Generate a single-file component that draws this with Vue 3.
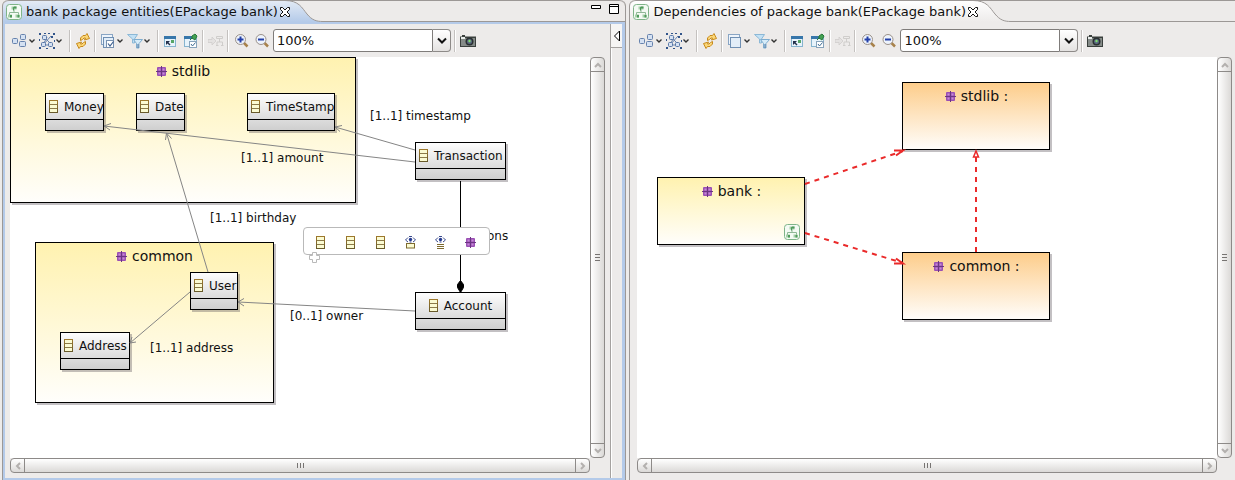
<script setup>
import { ref } from 'vue'

const tools = [
  { icon: 'arrange', label: 'Arrange all', menu: true },
  { icon: 'select', label: 'Select', menu: true },
  { sep: true },
  { icon: 'refresh', label: 'Refresh' },
  { sep: true },
  { icon: 'layers', label: 'Layers', menu: true },
  { icon: 'filter', label: 'Filters', menu: true },
  { sep: true },
  { icon: 'mode', label: 'Layouting mode' },
  { icon: 'pin', label: 'Pin elements' },
  { sep: true },
  { icon: 'paste', label: 'Paste layout', disabled: true },
  { sep: true },
  { icon: 'zoomin', label: 'Zoom in', wide: true },
  { icon: 'zoomout', label: 'Zoom out', wide: true },
]

const views = ref([
  {
    id: 'entities',
    title: 'bank package entities(EPackage bank)',
    active: true,
    zoom: '100%',
    packages: [
      { name: 'stdlib', x: 0, y: 0, w: 346, h: 146 },
      { name: 'common', x: 25, y: 185, w: 239, h: 161 },
    ],
    classes: [
      { name: 'Money', x: 35, y: 36, w: 59 },
      { name: 'Date', x: 126, y: 36, w: 49 },
      { name: 'TimeStamp', x: 237, y: 36, w: 88 },
      { name: 'Transaction', x: 405, y: 85, w: 91 },
      { name: 'User', x: 180, y: 215, w: 48 },
      { name: 'Account', x: 405, y: 235, w: 91, centered: true },
      { name: 'Address', x: 50, y: 275, w: 70 },
    ],
    labels: [
      { text: '[1..1] timestamp', x: 360, y: 51 },
      { text: '[1..1] amount', x: 231, y: 93 },
      { text: '[1..1] birthday', x: 200, y: 153 },
      { text: 'ons', x: 477, y: 171 },
      { text: '[0..1] owner', x: 280, y: 251 },
      { text: '[1..1] address', x: 140, y: 283 },
    ],
    palette: ['class', 'class', 'class', 'eyebox', 'eyelist', 'package'],
  },
  {
    id: 'dependencies',
    title: 'Dependencies of package bank(EPackage bank)',
    active: false,
    zoom: '100%',
    packages: [
      { name: 'stdlib :', x: 265, y: 25, w: 148, h: 68, tone: 'orange' },
      { name: 'bank :', x: 20, y: 120, w: 148, h: 68, badge: true },
      { name: 'common :', x: 265, y: 195, w: 148, h: 68, tone: 'orange' },
    ],
    classes: [],
    labels: [],
    palette: null,
  },
])

const place = (n) => ({
  left: n.x + 'px',
  top: n.y + 'px',
  width: n.w ? n.w + 'px' : null,
  height: n.h ? n.h + 'px' : null,
})
</script>

<template>
  <svg class="defs" width="0" height="0" aria-hidden="true">
    <defs>
      <linearGradient id="g-active" x1="0" y1="0" x2="0" y2="1">
        <stop offset="0" stop-color="#e4ebf5" /><stop offset="1" stop-color="#b4cae9" />
      </linearGradient>
      <linearGradient id="g-idle" x1="0" y1="0" x2="0" y2="1">
        <stop offset="0" stop-color="#ffffff" /><stop offset="1" stop-color="#edebea" />
      </linearGradient>
      <linearGradient id="g-olive" x1="0" y1="0" x2="0" y2="1">
        <stop offset="0" stop-color="#a07a2c" /><stop offset="1" stop-color="#66592a" />
      </linearGradient>
    </defs>
    <symbol id="i-diagram" viewBox="0 0 16 16">
      <rect x=".5" y=".5" width="15" height="15" rx="3" fill="#f4faf4" stroke="#7fb489" />
      <path d="M8 5v4M3.500 11V8.500h9V11" fill="none" stroke="#8fb896" />
      <path d="M5.500 2.500h5v3h-5zM2 10.500h4v3H2zM9.500 10.500h4v3h-4z" fill="#a5cfa9" />
      <path d="M8 2.500h2.500v2H8v2H7v-3zM4 11h2v2.500H4zM11.500 11h2v2.500h-2z" fill="#4f9a5b" />
    </symbol>
    <symbol id="i-arrange" viewBox="0 0 16 16">
      <g fill="#d5e1f2" stroke="#6682ad">
        <rect x=".5" y="5.500" width="5" height="5" rx="1" />
        <rect x="8.500" y="1.500" width="5" height="5" rx="1" />
        <rect x="7.500" y="8.500" width="6" height="5" rx="1" />
      </g>
    </symbol>
    <symbol id="i-select" viewBox="0 0 16 16">
      <path d="M6 5l6 6M4 12l4-8M12 3L4 12h8" fill="none" stroke="#6682ad" />
      <g fill="#d5e1f2" stroke="#5877a6">
        <rect x="3.500" y="2.500" width="4" height="4" rx="1" />
        <rect x="2.500" y="9.500" width="4" height="4" rx="1" />
        <rect x="9.500" y="9.500" width="4" height="4" rx="1" />
      </g>
      <path d="M0 0h2v2H0zM5 0h2v1H5zM9 0h2v1H9zM14 0h2v2h-2zM0 6h1v2H0zM0 14h2v2H0zM7 15h2v1H7zM14 14h2v2h-2zM15 7h1v2h-1zM12 3h2v2h-2z" fill="#31548a" />
    </symbol>
    <symbol id="i-refresh" viewBox="0 0 16 16">
      <g fill="#fbd778" stroke="#c78a1c" stroke-linejoin="round">
        <path d="M5.500 7.500V5L8 2.500h2.500L12 .5l2.500 5-5 1.500 1-2H9L7.500 6.500z" />
        <path d="M10.500 8.500V11L8 13.500H5.500L4 15.500l-2.500-5 5-1.500-1 2H7l1.500-1.500z" />
      </g>
    </symbol>
    <symbol id="i-layers" viewBox="0 0 16 16">
      <rect x="1.500" y="1.500" width="11" height="10" fill="#eef4fb" stroke="#89a5c4" />
      <rect x="3.500" y="4.500" width="10" height="10" fill="#e2edf8" stroke="#6f8fb3" />
    </symbol>
    <symbol id="i-layerscheck" viewBox="0 0 16 16">
      <use href="#i-layers" />
      <rect x="6.500" y="7.500" width="7" height="7" fill="#fff" stroke="#7791b0" />
      <path d="M8 10.500l2 2.500 3.500-4.500" fill="none" stroke="#3d5f8f" stroke-width="1.200" />
    </symbol>
    <symbol id="i-filter" viewBox="0 0 16 16">
      <path d="M.5 1.500h10L7.500 6v4h-2V6z" fill="#c2e1f5" stroke="#8cb8d6" />
      <path d="M6.500 6.500h9l-3.500 4v4.500H9.500v-4.500z" fill="#d6ecf9" stroke="#7eadcf" />
      <path d="M11 11v4" stroke="#426f9c" />
    </symbol>
    <symbol id="i-mode" viewBox="0 0 16 16">
      <rect x="1.500" y="4.500" width="11" height="9" fill="#e7f3fb" stroke="#86b4cf" />
      <path d="M1 3h12v3H1z" fill="#3776aa" />
      <path d="M3 8h4l-1.500 1.500L7.500 11.500l-1 1-2-2L3 12z" fill="#222f4a" />
      <rect x="8" y="7" width="3" height="3" fill="#57a667" />
    </symbol>
    <symbol id="i-pin" viewBox="0 0 16 16">
      <rect x="1.500" y="4.500" width="12" height="9" fill="#e7f3fb" stroke="#86b4cf" />
      <path d="M1 3h9v3H1z" fill="#3776aa" />
      <path d="M7 7l2-2M9 3l3-2 2 2-2 4-3-2z" stroke="#267837" fill="#43a153" />
      <rect x="6.500" y="8.500" width="7" height="6" fill="#fff" stroke="#87a3bb" />
      <path d="M8 11l1.500 2 3-3.500" fill="none" stroke="#3e6c94" />
    </symbol>
    <symbol id="i-paste" viewBox="0 0 16 16">
      <path d="M0 6.500h4V4l4 4-4 4V9.500H0z" fill="#e4e2e1" stroke="#cfcdcb" stroke-width=".8" />
      <path d="M8.500 3.500h6v2h-6zM11.500 6v3M9 12V9h5.500v3M8 12.500h2.500M13 12.500h2.500" fill="none" stroke="#cfcdcb" />
    </symbol>
    <symbol id="i-zoomin" viewBox="0 0 18 16">
      <path d="M11 10l3.500 3.500" stroke="#a8824b" stroke-width="2.500" />
      <circle cx="7.500" cy="6.500" r="5" fill="#edf3fc" stroke="#9b9189" />
      <path d="M4.500 6.500h6M7.500 3.500v6" stroke="#2440a8" stroke-width="2" />
    </symbol>
    <symbol id="i-zoomout" viewBox="0 0 18 16">
      <path d="M9.500 10l3.500 3.500" stroke="#a8824b" stroke-width="2.500" />
      <circle cx="6" cy="6.500" r="5" fill="#edf3fc" stroke="#9b9189" />
      <path d="M3 6.500h6" stroke="#2440a8" stroke-width="2" />
    </symbol>
    <symbol id="i-camera" viewBox="0 0 16 12">
      <path d="M2 0h3v1.500h11V12H0V1.500h2z" fill="#3a403d" />
      <path d="M1 3h14v8H1z" fill="#858b88" />
      <path d="M1 2h4v2H1z" fill="#e8ebe9" />
      <circle cx="9.500" cy="6.500" r="4" fill="#2b3032" />
      <circle cx="9.500" cy="6.500" r="2.500" fill="#5a6a80" />
      <circle cx="9.500" cy="6" r="1.200" fill="#7fdc6a" />
    </symbol>
    <symbol id="i-chevron" viewBox="0 0 8 8">
      <path d="M1.500 2.500L4 5l2.500-2.500" fill="none" stroke="#333" stroke-width="1.400" />
    </symbol>
    <symbol id="i-package" viewBox="0 0 11 11">
      <rect x="1" y="1" width="9" height="9" rx="1" fill="#9a4fb4" />
      <path d="M2.500 2.500h2v2h-2zM6.500 2.500h2v2h-2zM2.500 6.500h2v2h-2zM6.500 6.500h2v2h-2z" fill="#c58ad6" />
      <path d="M5.500 0v11M0 5.500h11" stroke="#6b3582" />
    </symbol>
    <symbol id="i-class" viewBox="0 0 9 13">
      <path fill="url(#g-olive)" d="M0 0h9v13H0z" />
      <path d="M1 1h7v11H1z" fill="#fbfbd2" />
      <path d="M1 4.500h7M1 8.500h7" stroke="#8b7a4a" />
    </symbol>
    <symbol id="i-eyebox" viewBox="0 0 11 13">
      <path d="M.5 4L3 1.500M10.500 4L8 1.500M.5 4L3 6M10.500 4L8 6M4 .5h3M4.500 6h2" stroke="#3a4a8c" fill="none" />
      <circle cx="5.500" cy="3.500" r="1.700" fill="#253a8f" />
      <rect x="1.500" y="7.500" width="8" height="4.500" fill="#fbfbd2" stroke="#7d6a2f" />
    </symbol>
    <symbol id="i-eyelist" viewBox="0 0 11 13">
      <path d="M.5 4L3 1.500M10.500 4L8 1.500M.5 4L3 6M10.500 4L8 6M4 .5h3M4.500 6h2" stroke="#3a4a8c" fill="none" />
      <circle cx="5.500" cy="3.500" r="1.700" fill="#253a8f" />
      <path d="M2 8.500h7M2 10.500h7M2 12.500h7" stroke="#7d6a2f" />
    </symbol>
    <symbol id="i-close" viewBox="0 0 12 12">
      <path d="M1.500 1.500h2L6 4l2.500-2.500h2v2L8 6l2.500 2.500v2h-2L6 8l-2.500 2.500h-2v-2L4 6 1.500 3.500z" fill="#fff" stroke="#111" />
    </symbol>
  </svg>

  <main class="workbench">
    <section v-for="v in views" :key="v.id" class="view" :class="{ active: v.active }">
      <header class="tabs">
        <div class="tab">
          <svg class="tab-icon" aria-hidden="true"><use href="#i-diagram" /></svg>
          <span class="tab-title">{{ v.title }}</span>
          <button class="close" type="button" aria-label="Close tab"><svg><use href="#i-close" /></svg></button>
        </div>
        <svg class="tail" viewBox="0 0 38 22" aria-hidden="true">
          <path d="M0 0C14 0 17 8 22 14S31 21.500 38 21.500V22H0z" :fill="v.active ? 'url(#g-active)' : 'url(#g-idle)'" />
          <path d="M0 .5h38M0 .5C14 .5 17 8 22 14S31 21.500 38 21.500" fill="none" stroke="#9c9896" />
        </svg>
        <div class="tab-rest">
          <template v-if="v.active">
            <button class="win" type="button" aria-label="Minimize"><svg><path d="M.5 2.500h9v3h-9z" fill="#fff" stroke="#000" /></svg></button>
            <button class="win" type="button" aria-label="Maximize"><svg><path d="M.5 1.500h9v9h-9zM.5 3.500h9" fill="#fff" stroke="#000" /></svg></button>
          </template>
        </div>
      </header>

      <div class="frame">
        <div class="main">
          <div class="toolbar" role="toolbar" :aria-label="v.title">
            <template v-for="(t, i) in tools" :key="i">
              <span v-if="t.sep" class="sep"></span>
              <button v-else type="button" class="tool" :class="{ menu: t.menu, wide: t.wide }" :disabled="t.disabled" :aria-label="t.label">
                <svg class="glyph"><use :href="'#i-' + (t.icon === 'layers' && v.active ? 'layerscheck' : t.icon)" /></svg>
                <svg v-if="t.menu" class="chev"><use href="#i-chevron" /></svg>
              </button>
            </template>
            <div class="combo">
              <input v-model="v.zoom" type="text" aria-label="Zoom level" />
              <button type="button" aria-label="Choose zoom level">
                <svg viewBox="0 0 10 8"><path d="M1 1.500l4 4 4-4" fill="none" stroke="#111" stroke-width="2" /></svg>
              </button>
            </div>
            <span class="sep"></span>
            <button type="button" class="tool" aria-label="Export as image"><svg class="camera"><use href="#i-camera" /></svg></button>
          </div>

          <div class="scrollpane">
            <div class="canvas">
              <div v-for="p in v.packages" :key="p.name" class="package" :class="p.tone" :style="place(p)">
                <div class="package-name"><svg><use href="#i-package" /></svg>{{ p.name }}</div>
                <svg v-if="p.badge" class="badge"><use href="#i-diagram" /></svg>
              </div>
              <div v-for="c in v.classes" :key="c.name" class="class" :class="{ centered: c.centered }" :style="place(c)">
                <div class="class-head"><svg><use href="#i-class" /></svg>{{ c.name }}</div>
                <div class="class-body"></div>
              </div>

              <svg v-if="v.active" class="edges" aria-hidden="true">
                <g fill="none" stroke="#858585">
                  <path d="M405 105L94 69M101 66.500L94 69l6 4" />
                  <path d="M405 93L325 70M332 68.500L325 70l5 4.500" />
                  <path d="M198 215L156.500 76M155.500 83l1-7 5 5.500" />
                  <path d="M180 235L120 286M122 280l-2 6 6-1" />
                  <path d="M405 254L228 245M234 241.500L228 245l6 4" />
                </g>
                <path d="M450.500 124v111" stroke="#000" fill="none" />
                <path d="M450.500 223.500l3 4v3l-3 5-3-5v-3z" stroke="#000" />
              </svg>
              <svg v-else class="edges" aria-hidden="true">
                <g fill="none" stroke="#ea2a2a" stroke-width="2">
                  <path d="M168 127L266 94M168 176L266 206M339 195V94" stroke-dasharray="5 5" />
                  <path d="M257 93.500h9l-7 5M257 206.500h9l-7-5" />
                  <path d="M339 94l-2.500 6h5z" fill="#fff" stroke-width="1.500" />
                </g>
              </svg>

              <span v-for="l in v.labels" :key="l.text" class="label" :style="place(l)">{{ l.text }}</span>

              <div v-if="v.palette" class="popup">
                <button v-for="(p, i) in v.palette" :key="i" type="button" :aria-label="'Create ' + p"><svg :class="'pi-' + p"><use :href="'#i-' + p" /></svg></button>
              </div>
              <svg v-if="v.palette" class="plus" viewBox="0 0 11 11" aria-hidden="true">
                <path d="M3.500.5h4v3h3v4h-3v3h-4v-3h-3v-4h3z" fill="#fff" stroke="#b9b9b9" />
              </svg>
            </div>

            <div class="bar vertical">
              <button type="button" aria-label="Scroll up"><svg viewBox="0 0 8 8"><path d="M1 6l3-3 3 3" /></svg></button>
              <div class="thumb"><i></i><i></i><i></i></div>
              <button type="button" aria-label="Scroll down"><svg viewBox="0 0 8 8"><path d="M1 2l3 3 3-3" /></svg></button>
            </div>
            <div class="bar horizontal">
              <button type="button" aria-label="Scroll left"><svg viewBox="0 0 8 8"><path d="M6 1L3 4l3 3" /></svg></button>
              <div class="thumb"><i></i><i></i><i></i></div>
              <button type="button" aria-label="Scroll right"><svg viewBox="0 0 8 8"><path d="M2 1l3 3-3 3" /></svg></button>
            </div>
          </div>
        </div>
        <aside v-if="v.active" class="palette-strip">
          <button type="button" aria-label="Show palette"><svg viewBox="0 0 8 12"><path d="M6.500 1v10L1.500 6z" fill="#fff" stroke="#000" /></svg></button>
        </aside>
      </div>
    </section>
  </main>
</template>

<style>
body {
  background: #edebea;
}
</style>

<style scoped>
.defs {
  position: absolute;
}
.workbench {
  display: flex;
  gap: 3px;
  height: 100vh;
  box-sizing: border-box;
  padding-left: 2px;
  overflow: hidden;
  background: #edebea;
  color: #111;
  font: 12px/16px "DejaVu Sans", Verdana, sans-serif;
}
button {
  padding: 0;
  border: 0;
  background: none;
  display: flex;
  align-items: center;
  justify-content: center;
}
svg {
  display: block;
  flex: none;
}
.view {
  flex: 606 1 0;
  min-width: 0;
  display: flex;
  flex-direction: column;
  border-left: 1px solid #9c9896;
  border-radius: 6px 0 0 0;
}
.view.active {
  flex-grow: 624;
  border-right: 1px solid #9c9896;
  border-radius: 6px 6px 0 0;
}
.tabs {
  display: flex;
  height: 22px;
  flex: none;
}
.tab {
  display: flex;
  align-items: center;
  box-sizing: border-box;
  height: 22px;
  padding-left: 3px;
  border-top: 1px solid #9c9896;
  border-top-left-radius: 6px;
  background: linear-gradient(#fff, #edebea);
}
.active .tab {
  background: linear-gradient(#e4ebf5, #b4cae9);
}
.tab-icon {
  width: 16px;
  height: 16px;
}
.tab-title {
  margin-left: 4px;
  font-size: 13px;
  line-height: 18px;
  white-space: nowrap;
}
.close {
  position: relative;
  z-index: 1;
  margin: 0 -6px 0 1px;
}
.close svg {
  width: 12px;
  height: 12px;
}
.tail {
  width: 38px;
  height: 22px;
}
.tab-rest {
  flex: 1;
  display: flex;
  justify-content: flex-end;
  align-items: flex-start;
  gap: 8px;
  padding: 2px 6px 0 0;
  border-top: 1px solid #9c9896;
  border-bottom: 1px solid #9c9896;
}
.active .tab-rest {
  border-top-right-radius: 6px;
}
.win svg {
  width: 10px;
  height: 12px;
}
.frame {
  flex: 1;
  min-height: 0;
  display: flex;
  padding-top: 2px;
}
.active .frame {
  padding-top: 0;
  border: solid #b4cae9;
  border-width: 2px 3px 2px 2px;
}
.main {
  flex: 1;
  min-width: 0;
  display: flex;
  flex-direction: column;
  padding: 0 3px 7px 7px;
}
.active .main {
  padding: 0 5px 5px;
}
.toolbar {
  height: 33px;
  flex: none;
  display: flex;
  align-items: center;
  padding-left: 2px;
}
.tool {
  width: 16px;
  height: 22px;
}
.tool + .tool:not(.menu) {
  margin-left: 4px;
}
.tool.menu {
  width: 27px;
  justify-content: flex-start;
}
.tool.wide {
  width: 18px;
}
.glyph {
  width: 16px;
  height: 16px;
}
.wide .glyph {
  width: 18px;
}
.chev {
  width: 8px;
  height: 8px;
}
.camera {
  width: 16px;
  height: 12px;
}
.sep {
  width: 1px;
  height: 22px;
  margin: 0 4px 0 3px;
  background: #c4c1bf;
  border-right: 1px solid #fff;
}
.combo {
  display: flex;
  width: 178px;
  height: 23px;
}
.combo input {
  flex: 1;
  min-width: 0;
  box-sizing: border-box;
  padding: 0 3px;
  border: 1px solid #7f7c7a;
  border-radius: 3px 0 0 3px;
  background: #fff;
  color: #111;
  font: 13px/20px "DejaVu Sans", Verdana, sans-serif;
}
.combo button {
  width: 18px;
  border: 1px solid #8d8a88;
  border-left: 0;
  border-radius: 0 4px 4px 0;
  background: linear-gradient(#fff, #e4e2e1);
}
.combo button svg {
  width: 10px;
  height: 8px;
}
.scrollpane {
  flex: 1;
  min-height: 0;
  display: grid;
  grid-template: minmax(0, 1fr) 15px / minmax(0, 1fr) 15px;
}
.canvas {
  position: relative;
  overflow: hidden;
  background: #fff;
}
.package,
.class {
  position: absolute;
  box-sizing: border-box;
  border: 1px solid #000;
  box-shadow: 2px 2px 0 rgba(80, 70, 80, 0.34);
}
.package {
  background: linear-gradient(#fff2b0, #fffefb);
}
.package.orange {
  background: linear-gradient(#fdcd8b, #fffdfa);
}
.package-name {
  display: flex;
  align-items: center;
  justify-content: center;
  gap: 5px;
  height: 26px;
  font-size: 14px;
  white-space: nowrap;
}
.package-name svg {
  width: 11px;
  height: 11px;
}
.badge {
  position: absolute;
  right: 4px;
  bottom: 4px;
  width: 16px;
  height: 16px;
}
.class-head {
  display: flex;
  align-items: center;
  gap: 6px;
  height: 25px;
  padding-left: 3px;
  overflow: hidden;
  border-bottom: 1px solid #000;
  background: linear-gradient(#fdfdfd, #dcdcdc);
  white-space: nowrap;
}
.centered .class-head {
  justify-content: center;
  padding: 0;
}
.class-head svg {
  width: 9px;
  height: 13px;
}
.class-body {
  height: 10px;
  background: linear-gradient(#dcdcdc, #cfcfcf);
}
.edges {
  position: absolute;
  left: 0;
  top: 0;
  width: 100%;
  height: 100%;
}
.label {
  position: absolute;
  white-space: nowrap;
}
.popup {
  position: absolute;
  left: 293px;
  top: 170px;
  display: flex;
  padding: 1px 4px 0 1px;
  border: 1px solid #b9b9b9;
  border-radius: 4px;
  background: #fff;
}
.popup button {
  width: 30px;
  height: 25px;
  padding-top: 2px;
}
.popup svg {
  width: 11px;
  height: 13px;
}
.popup .pi-package {
  height: 11px;
}
.plus {
  position: absolute;
  left: 299px;
  top: 195px;
  width: 11px;
  height: 11px;
}
.bar {
  display: flex;
  box-sizing: border-box;
  border: 1px solid #8d8a88;
  border-radius: 4px;
  overflow: hidden;
}
.bar svg {
  width: 8px;
  height: 8px;
  fill: none;
  stroke: #b3b0ae;
  stroke-width: 2;
}
.vertical {
  flex-direction: column;
  background: linear-gradient(90deg, #fff, #dbd9d7);
}
.horizontal {
  background: linear-gradient(#fff, #dbd9d7);
}
.thumb {
  flex: 1;
  display: flex;
  align-items: center;
  justify-content: center;
  gap: 2px;
}
.vertical .thumb {
  flex-direction: column;
  border: solid #8d8a88;
  border-width: 1px 0;
}
.horizontal .thumb {
  border: solid #8d8a88;
  border-width: 0 1px;
}
.vertical button {
  height: 13px;
}
.horizontal button {
  width: 13px;
}
.thumb i {
  background: #777472;
}
.vertical i {
  width: 5px;
  height: 1px;
}
.horizontal i {
  width: 1px;
  height: 5px;
}
.palette-strip {
  width: 11px;
  border-left: 1px solid #a5a2a0;
  box-shadow: inset 1px 0 #fff;
}
.palette-strip button {
  width: 11px;
  height: 24px;
  border-bottom: 1px solid #a5a2a0;
  background: #f6f5f4;
}
.palette-strip svg {
  width: 8px;
  height: 12px;
}
</style>
